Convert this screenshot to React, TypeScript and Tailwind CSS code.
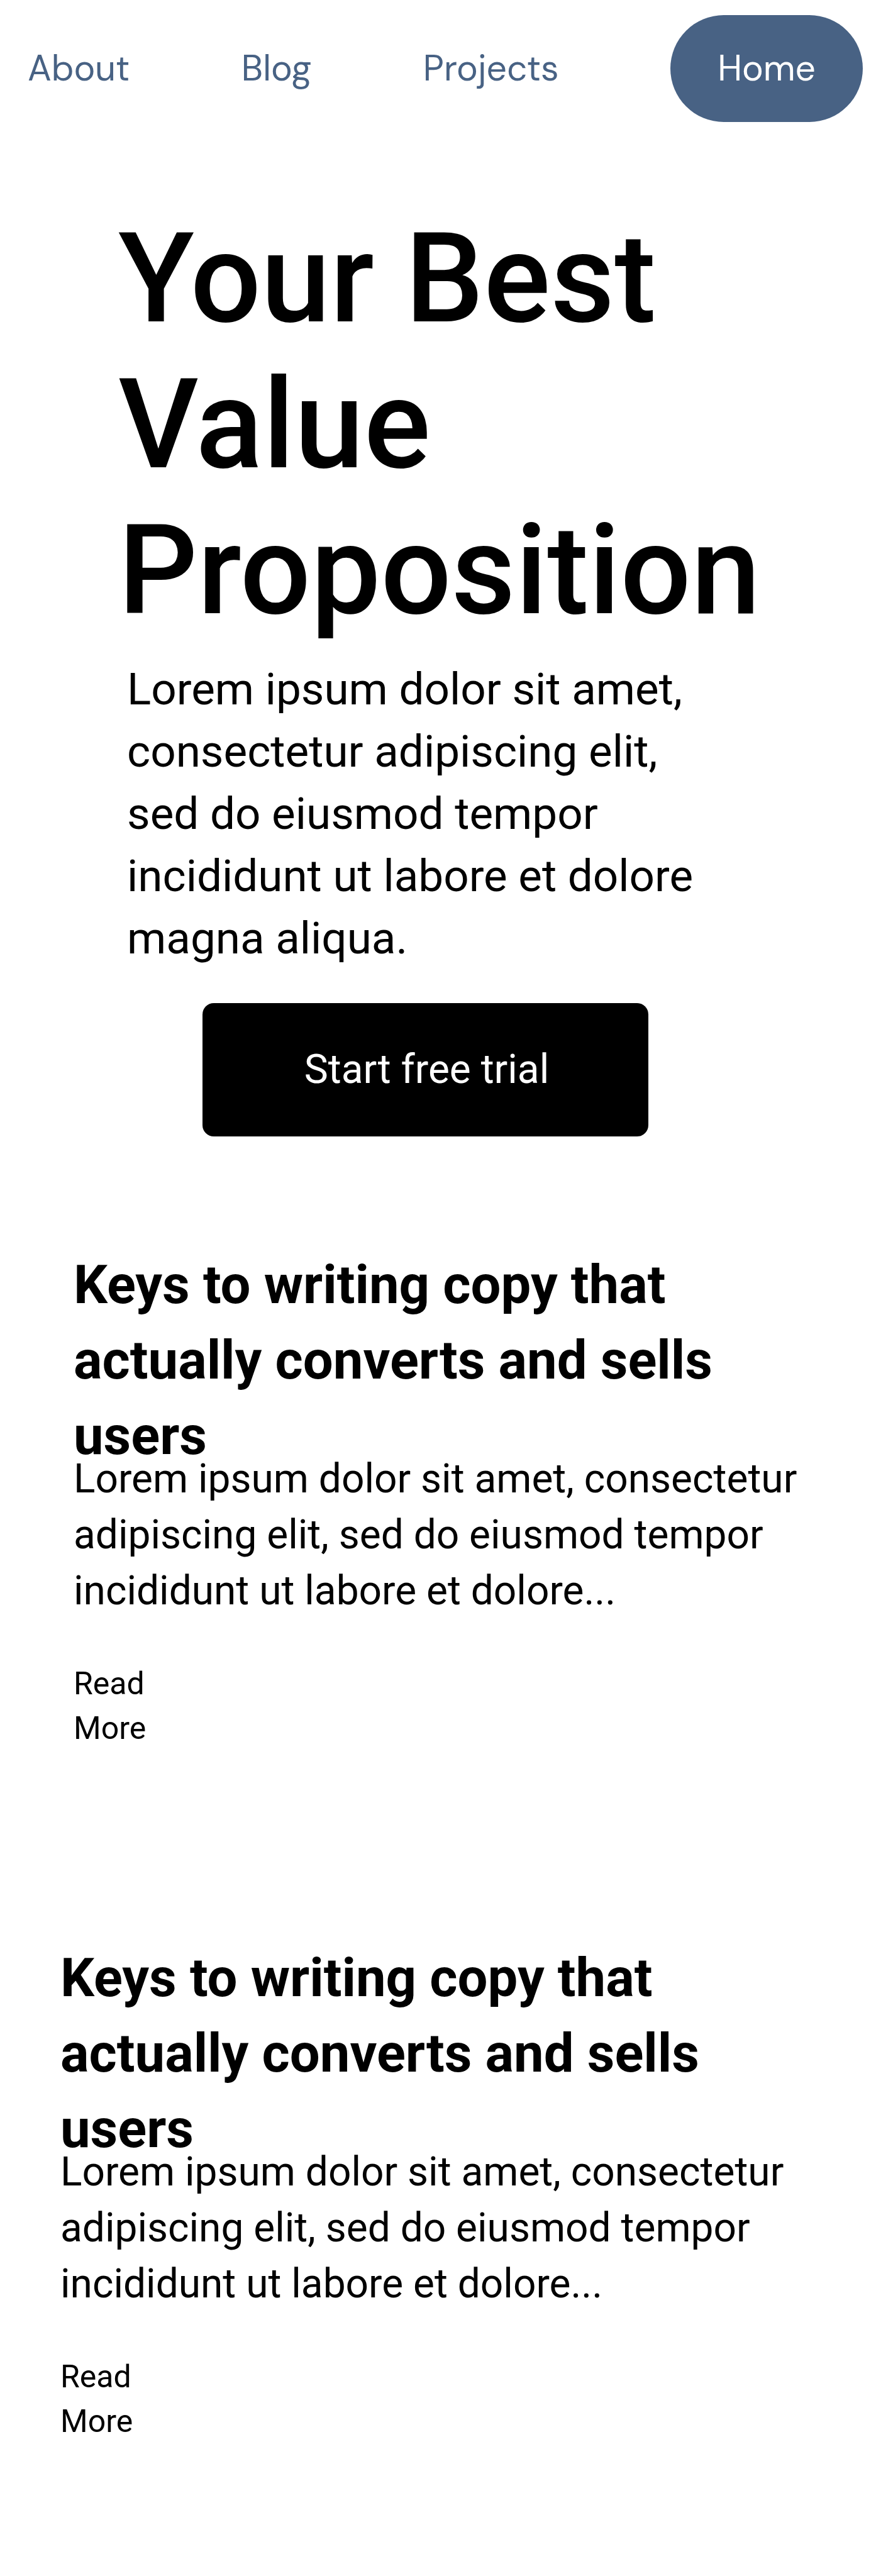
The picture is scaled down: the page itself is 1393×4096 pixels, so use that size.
const links = ["About", "Blog", "Projects"];

function Post({ className }: { className: string }) {
  return (
    <article className={className}>
      <h2 className="max-w-[1160px] text-[85px] leading-[120px] font-bold">
        Keys to writing copy that actually converts and sells users
      </h2>
      <p className="-mt-9 max-w-[1200px] text-[64px] leading-[89px]">
        Lorem ipsum dolor sit amet, consectetur adipiscing elit, sed do eiusmod tempor incididunt ut labore et dolore...
      </p>
      <a href="#post" className="mt-17 block w-[130px] text-[50px] leading-[71px]">
        Read More
      </a>
    </article>
  );
}

export default function App() {
  return (
    <div className="min-h-screen bg-white font-[Roboto,sans-serif] text-black">
      <nav className="flex items-center justify-between pt-6 pr-[21px] pl-11 font-['DM_Sans',Inter,sans-serif] text-[57px] leading-[74px] text-[#486284]">
        {links.map((label) => (
          <a key={label} href={"#" + label.toLowerCase()}>
            {label}
          </a>
        ))}
        <a href="#home" className="rounded-full bg-[#486284] px-[75px] py-12 text-white">
          Home
        </a>
      </nav>
      <main>
        <section className="pt-[133px] pl-[188px]">
          <h1 className="max-w-[1100px] text-[198px] leading-[232px] font-medium">Your Best Value Proposition</h1>
          <p className="mt-[23px] ml-[14px] max-w-[930px] text-[71px] leading-[99px]">
            Lorem ipsum dolor sit amet, consectetur adipiscing elit, sed do eiusmod tempor incididunt ut labore et
            dolore magna aliqua.
          </p>
          <button className="mt-[54px] ml-[134px] block h-[212px] w-[709px] rounded-[18px] bg-black pl-1 text-[64px] text-white">
            Start free trial
          </button>
        </section>
        <Post className="mt-[176px] pl-[117px]" />
        <Post className="mt-[301px] pl-24" />
      </main>
    </div>
  );
}
